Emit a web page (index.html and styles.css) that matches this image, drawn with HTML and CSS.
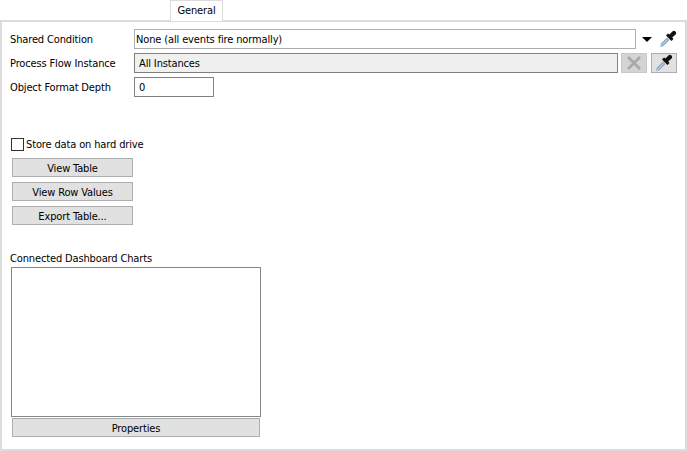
FILE: index.html
```html
<!DOCTYPE html>
<html lang="en">
<head>
<meta charset="utf-8">
<title>General</title>
<link rel="stylesheet" href="styles.css">
</head>
<body>
<div class="tabs"><div class="tab">General</div></div>
<main class="pane">
  <div class="row">
    <label class="label">Shared Condition</label>
    <div class="field grow light">None (all events fire normally)</div>
    <svg class="arrow" width="10" height="5" viewBox="0 0 10 5"><path d="M0 0H10L5 5Z" fill="#000"/></svg>
    <svg class="dropper" width="18" height="18" viewBox="0 0 18 18"><use href="#drop"/></svg>
  </div>
  <div class="row">
    <label class="label">Process Flow Instance</label>
    <div class="field grow readonly">All Instances</div>
    <div class="iconbtn disabled"><svg width="16" height="16" viewBox="0 0 16 16"><path d="M2 2L14 14M14 2L2 14" stroke="#a8a8a8" stroke-width="2.6" fill="none"/></svg></div>
    <div class="iconbtn"><svg width="18" height="18" viewBox="0 0 18 18"><use href="#drop"/></svg></div>
  </div>
  <div class="row">
    <label class="label">Object Format Depth</label>
    <div class="field short">0</div>
  </div>
  <div class="check"><span class="box"></span><span class="check-text">Store data on hard drive</span></div>
  <div class="buttons">
    <div class="btn">View Table</div>
    <div class="btn">View Row Values</div>
    <div class="btn">Export Table...</div>
  </div>
  <div class="charts-label">Connected Dashboard Charts</div>
  <div class="list"></div>
  <div class="btn wide">Properties</div>
</main>
<svg width="0" height="0" class="defs">
  <defs>
    <g id="drop">
      <path d="M1 17L2 13.5L8 7.5L10.5 10L4.5 16Z" fill="#8aa9c8"/>
      <path d="M2.2 15.8L8.5 9.5" stroke="#dbe6f0" stroke-width="0.8"/>
      <path d="M7 5.5L12.5 11L14.5 9L13.2 7.5L16.6 4.6C17.6 3.6 17.2 2 16.4 1.4C15.6 0.6 14.4 0.4 13.4 1.4L10.5 4.6L9 3.5Z" fill="#111"/>
    </g>
  </defs>
</svg>
</body>
</html>
```
FILE: styles.css
```css
html, body {
  margin: 0;
  padding: 0;
  background: #fff;
}
body {
  width: 687px;
  height: 451px;
  overflow: hidden;
  font-family: "DejaVu Sans Condensed", "DejaVu Sans", sans-serif;
  font-stretch: condensed;
  font-size: 11px;
  letter-spacing: -0.14px;
  color: #000;
}
.tabs {
  display: flex;
  height: 20px;
  padding-left: 170px;
}
.tab {
  width: 53px;
  height: 21px;
  box-sizing: border-box;
  border: 1px solid #dcdcdc;
  border-bottom: 0;
  background: #fff;
  text-align: center;
  line-height: 19px;
  position: relative;
  z-index: 1;
}
.pane {
  box-sizing: border-box;
  width: 687px;
  height: 431px;
  border: 2px solid #dcdcdc;
  padding: 7px 8px 0 9px;
  display: flex;
  flex-direction: column;
  align-items: flex-start;
}
.row {
  display: flex;
  align-items: center;
  height: 20px;
  margin-bottom: 4px;
  width: 100%;
}
.label {
  width: 124px;
  margin-left: -1px;
  padding-top: 2px;
  flex: none;
  line-height: 20px;
}
.field {
  box-sizing: border-box;
  height: 20px;
  line-height: 20px;
  border: 1px solid #808080;
  padding-left: 1px;
  background: #fff;
}
.field.light { border-color: #abadb3; }
.grow { flex: 1; min-width: 0; }
.short { width: 80px; padding-left: 4px; }
.readonly { background: #f0f0f0; padding-left: 4px; }
.arrow { margin: 0 7px 0 6px; flex: none; }
.dropper { flex: none; }
.iconbtn {
  box-sizing: border-box;
  width: 26px;
  height: 20px;
  margin-left: 4px;
  flex: none;
  display: flex;
  align-items: center;
  justify-content: center;
  background: #e1e1e1;
  border: 1px solid #adadad;
}
.iconbtn.disabled { background: #d4d4d4; border-color: #c8c8c8; margin-left: 3px; }
.check {
  display: flex;
  align-items: center;
  margin-top: 36px;
  height: 14px;
  line-height: 14px;
}
.check-text { padding-top: 2px; }
.box {
  box-sizing: border-box;
  width: 13px;
  height: 13px;
  border: 1px solid #333;
  margin-right: 2px;
  background: #fff;
}
.buttons {
  display: flex;
  flex-direction: column;
  gap: 5px;
  margin: 7px 0 0 1px;
}
.btn {
  box-sizing: border-box;
  width: 121px;
  height: 19px;
  line-height: 19px;
  background: #e1e1e1;
  border: 1px solid #adadad;
  text-align: center;
}
.charts-label {
  margin-top: 25px;
  margin-left: -1px;
  height: 16px;
  line-height: 18px;
}
.list {
  box-sizing: border-box;
  width: 250px;
  height: 150px;
  margin-top: 1px;
  border: 1px solid #82878c;
  background: #fff;
}
.btn.wide {
  width: 248px;
  margin: 1px 0 0 1px;
}
.defs { position: absolute; }
```
